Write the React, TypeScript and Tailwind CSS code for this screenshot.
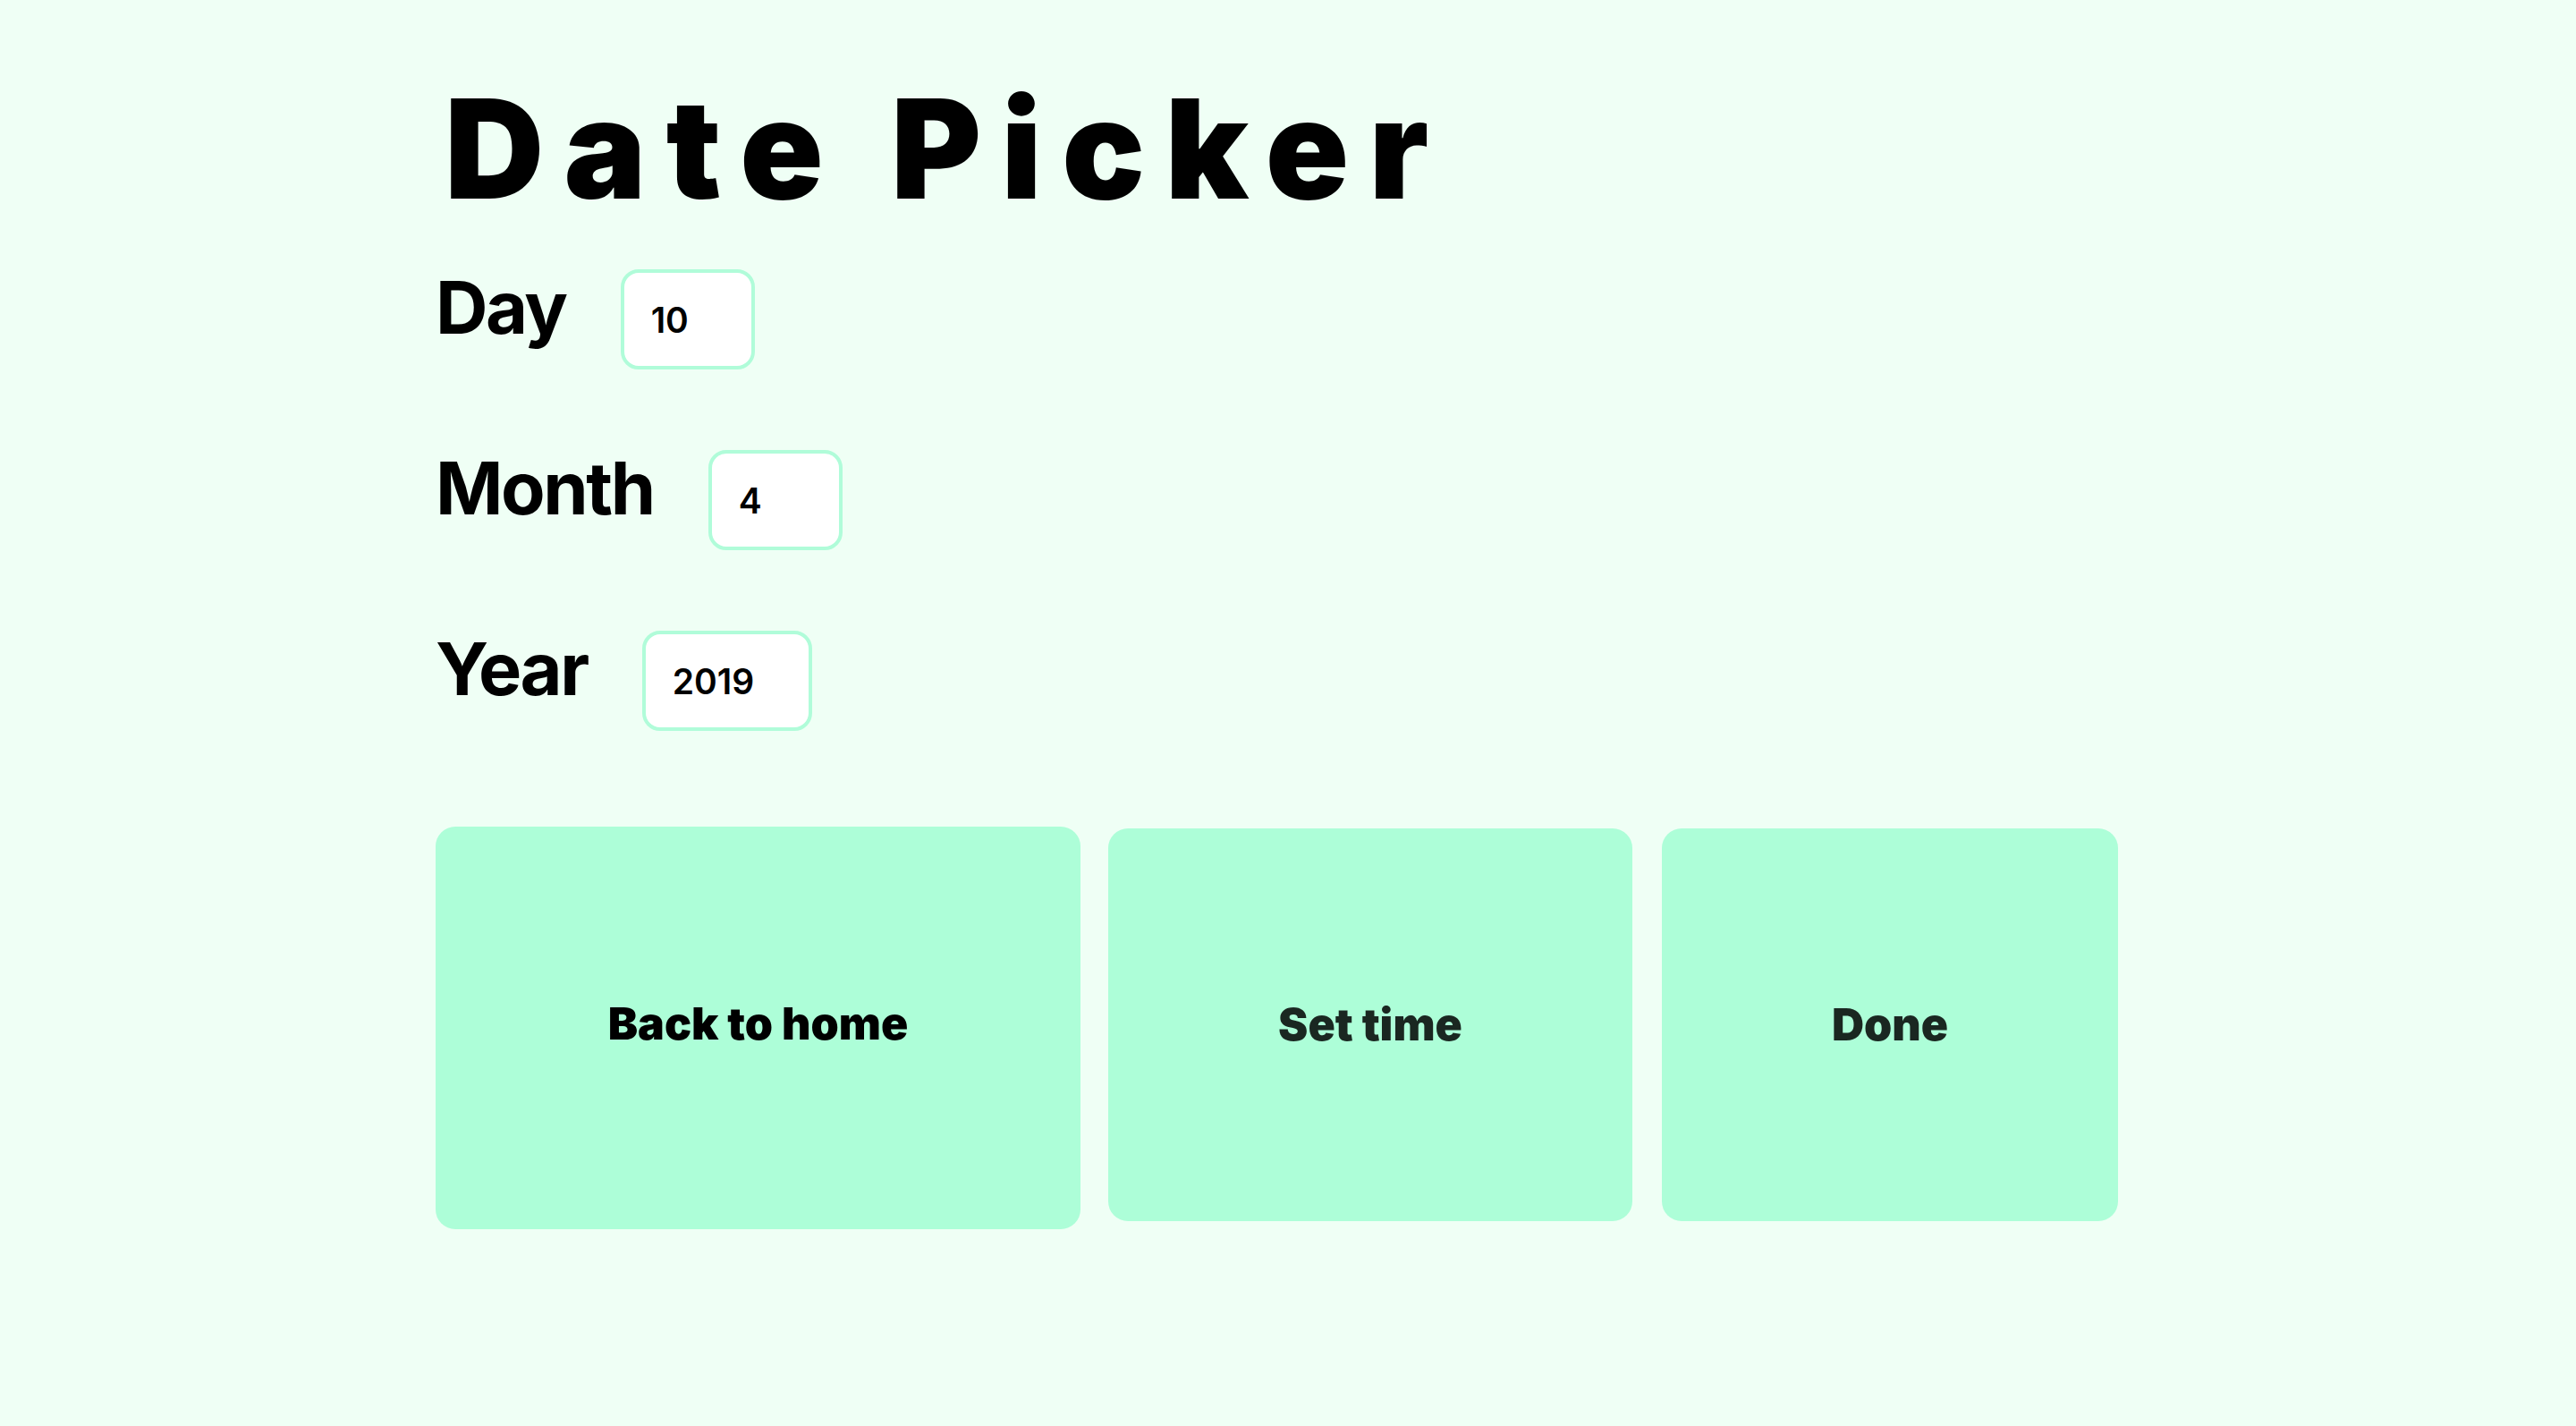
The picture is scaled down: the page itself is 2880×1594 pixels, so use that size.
import React from "react";

const font = { fontFamily: "Inter, 'Noto Sans', sans-serif" };

function Field({ label, value, width }: { label: string; value: string; width: string }) {
  return (
    <div className="flex items-start gap-[61px]">
      <span className="mt-[3px] text-[81px] leading-none font-bold text-black tracking-[-0.03em]">{label}</span>
      <input
        readOnly
        value={value}
        className={`${width} h-[112px] rounded-[20px] border-[4px] border-[#b0fcd9] bg-white pl-[30px] text-[39px] font-semibold text-black outline-none`}
        style={font}
      />
    </div>
  );
}

export default function App() {
  return (
    <div className="min-h-screen w-full bg-[#effff5]" style={font}>
      <div className="flex flex-col pl-[487px] pt-[89px]">
        <h1 className="ml-[10px] text-[154px] leading-none font-black tracking-[0.145em] text-black">Date Picker</h1>
        <div className="mt-[58px] flex flex-col gap-[90px]">
          <Field label="Day" value="10" width="w-[150px]" />
          <Field label="Month" value="4" width="w-[150px]" />
          <Field label="Year" value="2019" width="w-[190px]" />
        </div>
        <div className="mt-[107px] flex items-start">
          <button className="flex h-[450px] w-[721px] items-center justify-center rounded-[22px] bg-[#adfed8] pb-[10px] text-[50px] font-black text-black">
            Back to home
          </button>
          <button className="ml-[31px] mt-[2px] flex h-[439px] w-[586px] items-center justify-center rounded-[22px] bg-[#adfed8] text-[50px] font-black text-[#1a2721]">
            Set time
          </button>
          <button className="ml-[33px] mt-[2px] flex h-[439px] w-[510px] items-center justify-center rounded-[22px] bg-[#adfed8] text-[50px] font-black text-[#1a2721]">
            Done
          </button>
        </div>
      </div>
    </div>
  );
}
